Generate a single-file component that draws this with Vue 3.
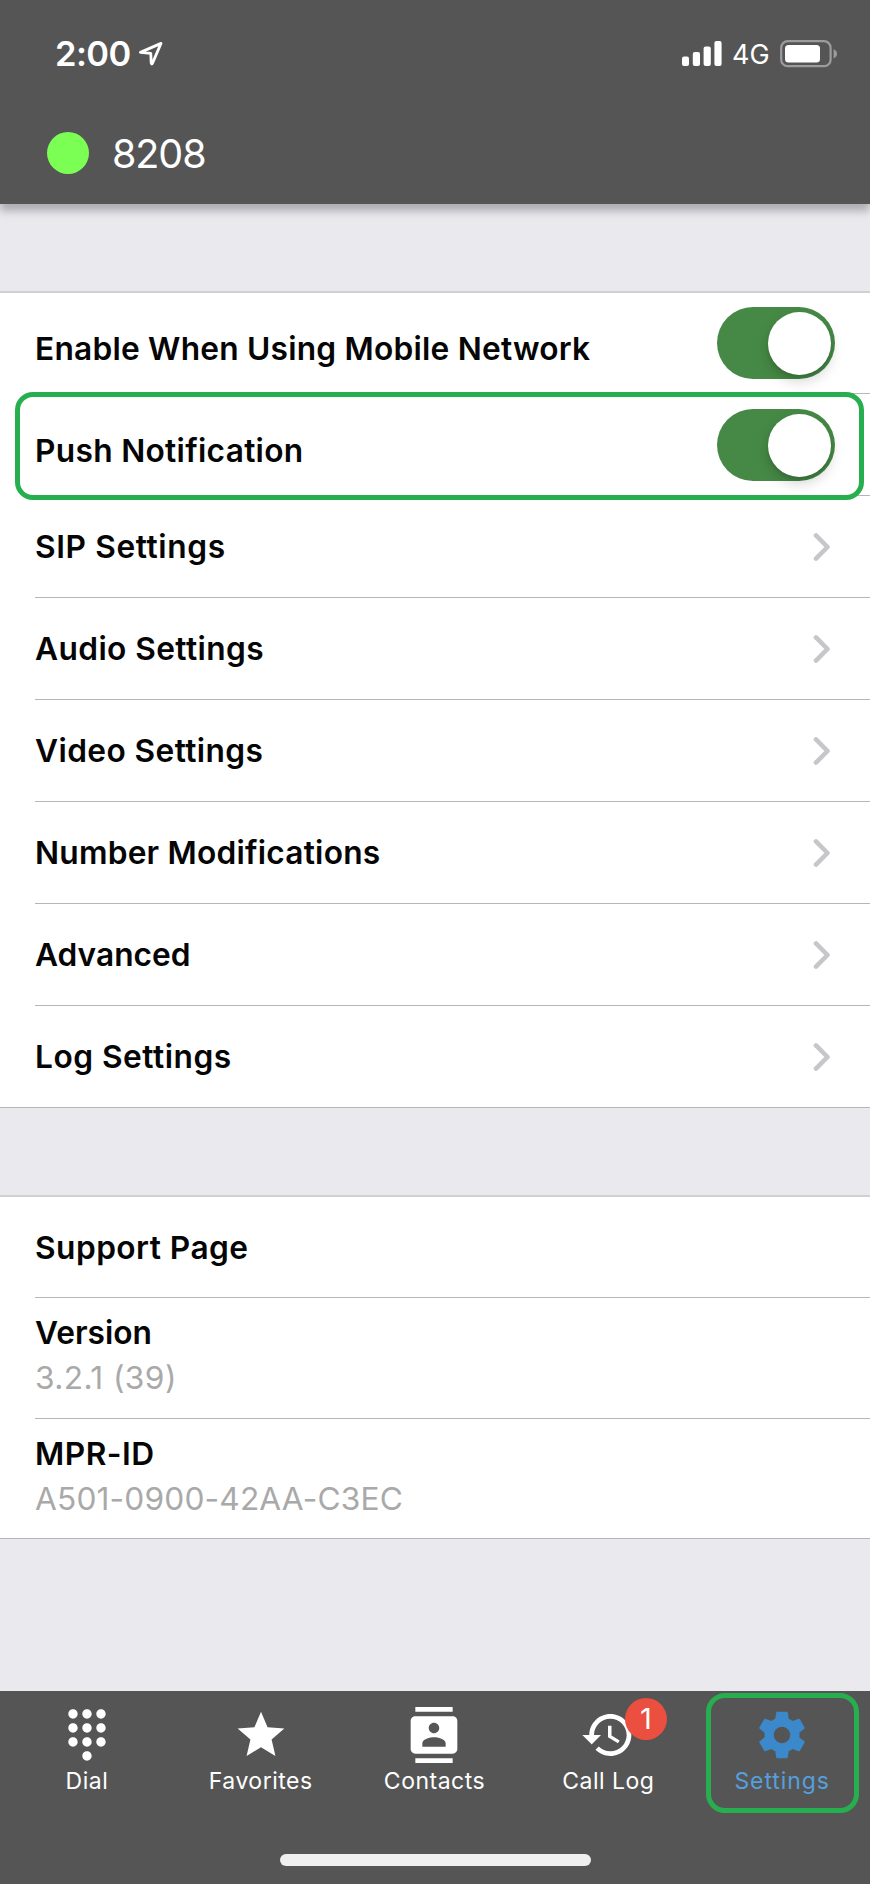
<script setup>
const toggles = [
  { label: 'Enable When Using Mobile Network', cls: 't-mobile' },
  { label: 'Push Notification', cls: 't-push', marked: true },
]
const links = [
  { label: 'SIP Settings', cls: 't-sip' },
  { label: 'Audio Settings', cls: 't-audio' },
  { label: 'Video Settings', cls: 't-video' },
  { label: 'Number Modifications', cls: 't-number' },
  { label: 'Advanced', cls: 't-advanced' },
  { label: 'Log Settings', cls: 't-log' },
]
const details = [
  { label: 'Version', value: '3.2.1 (39)', cls: 't-version' },
  { label: 'MPR-ID', value: 'A501-0900-42AA-C3EC', cls: 't-mpr' },
]
const tabs = [
  {
    label: 'Dial',
    icon: 'M12 19c-1.1 0-2 .9-2 2s.9 2 2 2 2-.9 2-2-.9-2-2-2zM6 1c-1.1 0-2 .9-2 2s.9 2 2 2 2-.9 2-2-.9-2-2-2zm0 6c-1.1 0-2 .9-2 2s.9 2 2 2 2-.9 2-2-.9-2-2-2zm0 6c-1.1 0-2 .9-2 2s.9 2 2 2 2-.9 2-2-.9-2-2-2zm12-8c1.1 0 2-.9 2-2s-.9-2-2-2-2 .9-2 2 .9 2 2 2zm-6 8c-1.1 0-2 .9-2 2s.9 2 2 2 2-.9 2-2-.9-2-2-2zm6 0c-1.1 0-2 .9-2 2s.9 2 2 2 2-.9 2-2-.9-2-2-2zm0-6c-1.1 0-2 .9-2 2s.9 2 2 2 2-.9 2-2-.9-2-2-2zm-6 0c-1.1 0-2 .9-2 2s.9 2 2 2 2-.9 2-2-.9-2-2-2zm0-6c-1.1 0-2 .9-2 2s.9 2 2 2 2-.9 2-2-.9-2-2-2z',
  },
  {
    label: 'Favorites',
    icon: 'M12 17.27L18.18 21l-1.64-7.03L22 9.24l-7.19-.61L12 2 9.19 8.63 2 9.24l5.46 4.73L5.82 21z',
  },
  {
    label: 'Contacts',
    icon: 'M20 0H4v2h16V0zM4 24h16v-2H4v2zM20 4H4c-1.1 0-2 .9-2 2v12c0 1.1.9 2 2 2h16c1.1 0 2-.9 2-2V6c0-1.1-.9-2-2-2zm-8 2.75c1.24 0 2.25 1.01 2.25 2.25s-1.01 2.25-2.25 2.25S9.75 10.24 9.75 9 10.76 6.75 12 6.75zM17 17H7v-1.5c0-1.67 3.33-2.5 5-2.5s5 .83 5 2.5V17z',
  },
  {
    label: 'Call Log',
    badge: 1,
    icon: 'M13 3c-4.97 0-9 4.03-9 9H1l3.89 3.89.07.14L9 12H6c0-3.87 3.13-7 7-7s7 3.13 7 7-3.13 7-7 7c-1.93 0-3.68-.79-4.94-2.06l-1.42 1.42C8.27 19.99 10.51 21 13 21c4.97 0 9-4.03 9-9s-4.03-9-9-9zm-1 5v5l4.28 2.54.72-1.21-3.5-2.08V8H12z',
  },
  {
    label: 'Settings',
    active: true,
    icon: 'M19.43 12.98c.04-.32.07-.64.07-.98s-.03-.66-.07-.98l2.11-1.65c.19-.15.24-.42.12-.64l-2-3.46c-.12-.22-.39-.3-.61-.22l-2.49 1c-.52-.4-1.08-.73-1.69-.98l-.38-2.65C14.46 2.18 14.25 2 14 2h-4c-.25 0-.46.18-.49.42l-.38 2.65c-.61.25-1.17.59-1.69.98l-2.49-1c-.23-.09-.49 0-.61.22l-2 3.46c-.13.22-.07.49.12.64l2.11 1.65c-.04.32-.07.65-.07.98s.03.66.07.98l-2.11 1.65c-.19.15-.24.42-.12.64l2 3.46c.12.22.39.3.61.22l2.49-1c.52.4 1.08.73 1.69.98l.38 2.65c.03.24.24.42.49.42h4c.25 0 .46-.18.49-.42l.38-2.65c.61-.25 1.17-.59 1.69-.98l2.49 1c.23.09.49 0 .61-.22l2-3.46c.12-.22.07-.49-.12-.64l-2.11-1.65zM12 15.5c-1.93 0-3.5-1.57-3.5-3.5s1.57-3.5 3.5-3.5 3.5 1.57 3.5 3.5-1.57 3.5-3.5 3.5z',
  },
]
</script>

<template>
  <div class="screen">
    <header class="top">
      <div class="status">
        <span class="time">2:00</span>
        <svg class="arrow" viewBox="0 0 26 26">
          <path d="M2.4 11.4 L23 2.4 L14.6 22 Q13.6 24 13.2 22 L12.8 12.4 Z" />
        </svg>
        <div class="indicators">
          <svg class="signal" viewBox="0 0 40 26">
            <rect x="0" y="15.5" width="7" height="9.5" rx="2" />
            <rect x="10.8" y="11" width="7.2" height="14" rx="2" />
            <rect x="21.6" y="5.5" width="7.2" height="19.5" rx="2" />
            <rect x="32.4" y="0" width="7.2" height="25" rx="2" />
          </svg>
          <span class="network">4G</span>
          <svg class="battery" viewBox="0 0 58 28">
            <rect class="shell" x="1.2" y="1.2" width="49.4" height="25" rx="6.5" />
            <rect x="5" y="5" width="35" height="17.4" rx="3.5" />
            <path class="nub" d="M53.6 9.2 Q57 10.6 57 13.8 T53.6 18.4 Z" />
          </svg>
        </div>
      </div>
      <div class="account">
        <span class="dot"></span>
        <span class="extension">8208</span>
      </div>
    </header>

    <main class="content">
      <section class="group">
        <div v-for="row in toggles" :key="row.label" class="row toggle-row">
          <span class="label" :class="row.cls">{{ row.label }}</span>
          <span class="switch"><span class="knob"></span></span>
          <span v-if="row.marked" class="marker"></span>
        </div>
        <div v-for="row in links" :key="row.label" class="row link-row">
          <span class="label" :class="row.cls">{{ row.label }}</span>
          <svg class="chevron" viewBox="0 0 18 30">
            <path d="M3 3.4 L14.5 15 L3 26.6" />
          </svg>
        </div>
      </section>

      <section class="group about">
        <div class="row">
          <span class="label t-support">Support Page</span>
        </div>
        <div v-for="row in details" :key="row.label" class="row detail">
          <span class="label" :class="row.cls">{{ row.label }}</span>
          <span class="value" :class="row.cls + '-value'">{{ row.value }}</span>
        </div>
      </section>
    </main>

    <nav class="tabbar">
      <div class="tabs">
        <div v-for="tab in tabs" :key="tab.label" class="tab" :class="{ active: tab.active }">
          <svg class="icon" viewBox="0 0 24 24"><path :d="tab.icon" /></svg>
          <span class="caption">{{ tab.label }}</span>
          <span v-if="tab.badge" class="badge">{{ tab.badge }}</span>
          <span v-if="tab.active" class="marker"></span>
        </div>
      </div>
      <div class="home"></div>
    </nav>
  </div>
</template>

<style>
body {
  margin: 0;
}
</style>

<style scoped>
* {
  box-sizing: border-box;
}
.screen {
  width: 870px;
  height: 1884px;
  display: flex;
  flex-direction: column;
  overflow: hidden;
  background: #eae9ee;
  font-family: Inter, "Liberation Sans", sans-serif;
  white-space: nowrap;
}
.top {
  flex: none;
  height: 204px;
  background: #555;
  color: #fff;
  box-shadow: 0 7px 8px rgba(60, 55, 65, 0.34);
}
.status {
  display: flex;
  align-items: center;
  height: 107px;
  padding: 0 32px 0 55px;
}
.time {
  width: 83px;
  font-size: 34.5px;
  font-weight: 600;
  letter-spacing: -0.6px;
}
.arrow {
  width: 26px;
  height: 26px;
}
.arrow path {
  fill: none;
  stroke: #fff;
  stroke-width: 2.8;
  stroke-linejoin: round;
}
.indicators {
  display: flex;
  align-items: center;
  margin-left: auto;
}
.signal {
  width: 40px;
  height: 26px;
  fill: #fff;
}
.network {
  width: 48px;
  margin-left: 10px;
  font-size: 27px;
  line-height: 30px;
  padding-top: 2px;
}
.battery {
  width: 58px;
  height: 28px;
  fill: #fff;
}
.battery .shell {
  fill: none;
  stroke: #9c9c9c;
  stroke-width: 2.2;
}
.battery .nub {
  fill: #9c9c9c;
}
.account {
  display: flex;
  align-items: center;
  height: 92px;
  padding-left: 46.5px;
}
.dot {
  width: 42px;
  height: 42px;
  border-radius: 50%;
  background: #7cff55;
}
.extension {
  margin-left: 23.5px;
  padding-top: 2px;
  font-size: 39.5px;
  font-weight: 400;
  letter-spacing: -1.1px;
}
.content {
  flex: 1;
  padding-top: 87px;
}
.group {
  background: #fff;
  border-top: 2px solid #d0cfd4;
}
.about {
  margin-top: 87px;
}
.row {
  position: relative;
  display: flex;
  align-items: center;
  justify-content: space-between;
  height: 102px;
  padding: 0 37px 0 35px;
}
.row::after {
  content: "";
  position: absolute;
  right: 0;
  bottom: 0;
  left: 35px;
  height: 1px;
  background: #b6b5b9;
}
.row:last-child::after {
  left: 0;
}
.row:first-child {
  height: 101px;
}
.label {
  font-size: 31.7px;
  font-weight: 600;
  line-height: 45px;
  color: #050505;
}
.t-mobile {
  letter-spacing: 0.22px;
}
.t-push {
  letter-spacing: 0.3px;
}
.t-sip {
  letter-spacing: 0.6px;
}
.t-log {
  letter-spacing: 0.5px;
}
.t-audio,
.t-video {
  letter-spacing: 0.4px;
}
.t-number {
  letter-spacing: 0.22px;
}
.t-support {
  letter-spacing: 0.45px;
}
.t-mpr {
  letter-spacing: 0.5px;
}
.toggle-row {
  padding-right: 35px;
}
.toggle-row:first-child {
  padding-bottom: 2px;
}
.toggle-row .label {
  padding-top: 10px;
}
.toggle-row .t-mobile {
  padding-top: 12px;
}
.link-row .label {
  padding-bottom: 1px;
}
.switch {
  width: 118px;
  height: 72px;
  padding: 5px 4px;
  border-radius: 36px;
  background: #468946;
  display: flex;
  justify-content: flex-end;
}
.knob {
  width: 63px;
  height: 63px;
  border-radius: 50%;
  background: #fff;
  box-shadow: 0 6px 14px rgba(0, 0, 0, 0.18), 0 3px 3px rgba(0, 0, 0, 0.08);
}
.marker {
  position: absolute;
  border: 5px solid #27af4f;
  z-index: 1;
}
.row .marker {
  top: -2px;
  right: 6px;
  bottom: -4px;
  left: 15px;
  border-radius: 18px;
}
.chevron {
  width: 18px;
  height: 30px;
  margin-right: 2px;
}
.chevron path {
  fill: none;
  stroke: #c6c6cb;
  stroke-width: 4.6;
  stroke-linecap: round;
  stroke-linejoin: round;
}
.detail {
  flex-direction: column;
  align-items: flex-start;
  justify-content: flex-start;
  height: 120.5px;
  padding-top: 12px;
}
.value {
  font-size: 31.7px;
  line-height: 45px;
  font-weight: 400;
  color: #a9a9a9;
}
.t-version-value {
  letter-spacing: 0.4px;
}
.t-mpr-value {
  letter-spacing: 0.15px;
}
.tabbar {
  position: relative;
  flex: none;
  display: flex;
  flex-direction: column;
  align-items: center;
  justify-content: space-between;
  height: 193px;
  padding-bottom: 18px;
  background: #555;
}
.tabs {
  display: flex;
  width: 869px;
  align-self: flex-start;
}
.tab {
  position: relative;
  flex: 1;
  display: flex;
  flex-direction: column;
  align-items: center;
  height: 126px;
  padding-top: 16px;
  color: #fff;
}
.icon {
  width: 56px;
  height: 56px;
  fill: currentColor;
}
.caption {
  margin-top: 3px;
  font-size: 23px;
  font-weight: 400;
  line-height: 30px;
  letter-spacing: 0.5px;
}
.active .icon {
  fill: #3b88ca;
}
.active .caption {
  color: #559fde;
  letter-spacing: 0.9px;
}
.badge {
  position: absolute;
  top: 7px;
  left: 103.6px;
  width: 42px;
  height: 42px;
  border-radius: 50%;
  background: #ea4f3f;
  font-size: 29px;
  line-height: 42px;
  text-align: center;
}
.tab .marker {
  top: 2px;
  left: 10.8px;
  width: 153px;
  height: 120px;
  border-radius: 19px;
}
.home {
  width: 311px;
  height: 12px;
  border-radius: 6px;
  background: #efefef;
}
</style>
